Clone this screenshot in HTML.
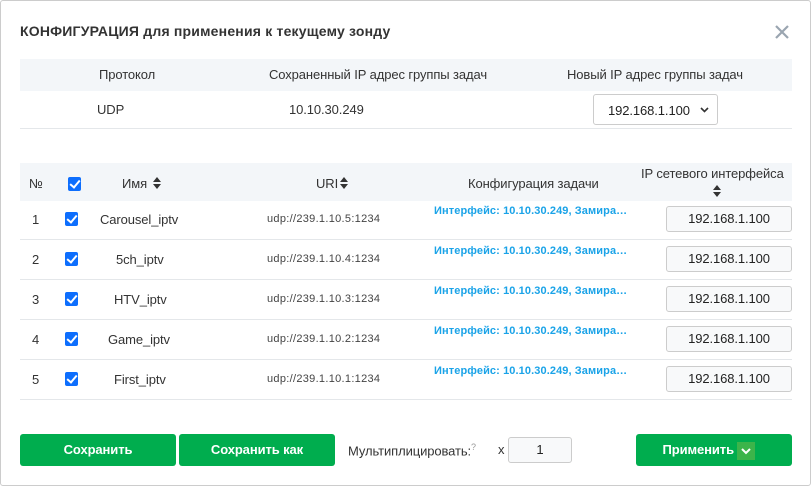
<!DOCTYPE html><html><head><meta charset="utf-8"><style>
*{box-sizing:border-box;margin:0;padding:0}
body{width:812px;height:492px;background:#fff;font-family:"Liberation Sans",sans-serif;color:#333;position:relative;overflow:hidden;font-size:13px;letter-spacing:-0.1px}
.modal{position:absolute;left:0;top:0;width:811px;height:486px;border:1px solid #ccc;border-radius:3px;background:#fff}
.a{position:absolute;white-space:nowrap}
.hdr{position:absolute;left:20px;width:772px;background:#f3f6f9}
.line{position:absolute;left:20px;width:772px;height:1px;background:#e4e7ea}
.cb{position:absolute;width:13px;height:14px;background:#0d6efd;border-radius:2px}
.cb:after{content:"";position:absolute;left:4px;top:1px;width:4px;height:8px;border:solid #fff;border-width:0 2px 2px 0;transform:rotate(40deg)}
.ip{position:absolute;left:666px;width:126px;height:26px;border:1px solid #ccc;border-radius:3px;background:#f8f9fa;text-align:center;line-height:24px;color:#222}
.cfg{color:#1aa3e8;font-weight:bold;font-size:11px;letter-spacing:0.1px}
.uri{font-size:11px;color:#444;letter-spacing:0.3px}
.btn{position:absolute;top:434px;height:32px;background:#00ad4e;border-radius:3px;color:#fff;font-weight:bold;text-align:center;line-height:32px}
</style></head><body><div class="modal"></div>
<svg width="0" height="0" style="position:absolute"><defs><g id="srt"><path d="M0 5L4 0L8 5Z M0 7L4 12L8 7Z" fill="#333"/></g></defs></svg>
<div class="a" style="left:20px;top:23px;font-weight:bold;font-size:14px;color:#333;letter-spacing:0.2px">КОНФИГУРАЦИЯ для применения к текущему зонду</div>
<svg class="a" style="left:775px;top:25px" width="14" height="14"><path d="M1 1L13 13M13 1L1 13" stroke="#9aa5b0" stroke-width="2.2"/></svg>
<div class="hdr" style="top:59px;height:32px"></div>
<div class="a" style="left:99px;top:67px">Протокол</div>
<div class="a" style="left:269px;top:67px">Сохраненный IP адрес группы задач</div>
<div class="a" style="left:567px;top:67px">Новый IP адрес группы задач</div>
<div class="a" style="left:97px;top:102px">UDP</div>
<div class="a" style="left:289px;top:102px">10.10.30.249</div>
<div class="a" style="left:593px;top:94px;width:125px;height:31px;border:1px solid #ccc;border-radius:3px;padding:8px 0 0 14px;color:#222">192.168.1.100<svg style="position:absolute;right:8px;top:12px" width="9" height="6"><path d="M1 1L4.5 4.5L8 1" stroke="#333" stroke-width="1.6" fill="none"/></svg></div>
<div class="line" style="top:128px"></div>
<div class="hdr" style="top:163px;height:38px"></div>
<div class="a" style="left:29px;top:176px">№</div>
<div class="cb" style="left:68px;top:177px"></div>
<div class="a" style="left:122px;top:176px">Имя</div><svg class="a" style="left:153px;top:177px" width="8" height="12"><use href="#srt"/></svg>
<div class="a" style="left:316px;top:176px">URI</div><svg class="a" style="left:340px;top:177px" width="8" height="12"><use href="#srt"/></svg>
<div class="a" style="left:468px;top:176px">Конфигурация задачи</div>
<div class="a" style="left:641px;top:166px">IP сетевого интерфейса</div>
<svg class="a" style="left:713px;top:185px" width="8" height="12"><use href="#srt"/></svg>

<div class="a" style="left:32px;top:212px">1</div><div class="cb" style="left:65px;top:212px"></div><div class="a" style="left:100px;top:212px">Carousel_iptv</div><div class="a uri" style="left:267px;top:213px">udp://239.1.10.5:1234</div><div class="a cfg" style="left:434px;top:205px">Интерфейс: 10.10.30.249, Замира…</div><div class="ip" style="top:206px">192.168.1.100</div><div class="line" style="top:239px"></div>
<div class="a" style="left:32px;top:252px">2</div><div class="cb" style="left:65px;top:252px"></div><div class="a" style="left:116px;top:252px">5ch_iptv</div><div class="a uri" style="left:267px;top:253px">udp://239.1.10.4:1234</div><div class="a cfg" style="left:434px;top:245px">Интерфейс: 10.10.30.249, Замира…</div><div class="ip" style="top:246px">192.168.1.100</div><div class="line" style="top:279px"></div>
<div class="a" style="left:32px;top:292px">3</div><div class="cb" style="left:65px;top:292px"></div><div class="a" style="left:114px;top:292px">HTV_iptv</div><div class="a uri" style="left:267px;top:293px">udp://239.1.10.3:1234</div><div class="a cfg" style="left:434px;top:285px">Интерфейс: 10.10.30.249, Замира…</div><div class="ip" style="top:286px">192.168.1.100</div><div class="line" style="top:319px"></div>
<div class="a" style="left:32px;top:332px">4</div><div class="cb" style="left:65px;top:332px"></div><div class="a" style="left:108px;top:332px">Game_iptv</div><div class="a uri" style="left:267px;top:333px">udp://239.1.10.2:1234</div><div class="a cfg" style="left:434px;top:325px">Интерфейс: 10.10.30.249, Замира…</div><div class="ip" style="top:326px">192.168.1.100</div><div class="line" style="top:359px"></div>
<div class="a" style="left:32px;top:372px">5</div><div class="cb" style="left:65px;top:372px"></div><div class="a" style="left:114px;top:372px">First_iptv</div><div class="a uri" style="left:267px;top:373px">udp://239.1.10.1:1234</div><div class="a cfg" style="left:434px;top:365px">Интерфейс: 10.10.30.249, Замира…</div><div class="ip" style="top:366px">192.168.1.100</div><div class="line" style="top:399px"></div>

<div class="btn" style="left:20px;width:156px">Сохранить</div>
<div class="btn" style="left:179px;width:156px">Сохранить как</div>
<div class="a" style="left:348px;top:442px">Мультиплицировать:<sup style="font-size:9px;color:#999">?</sup></div>
<div class="a" style="left:498px;top:442px">x</div>
<div class="a" style="left:508px;top:437px;width:64px;height:26px;border:1px solid #ccc;border-radius:3px;background:#f8f9fa;text-align:center;line-height:24px;color:#222">1</div>
<div class="btn" style="left:636px;width:156px;padding-right:10px">Применить <span style="display:inline-block;width:18px;height:18px;background:#3cb44a;vertical-align:middle;position:relative"><svg style="position:absolute;left:4px;top:6px" width="10" height="7"><path d="M1 1L5 5L9 1" stroke="#fff" stroke-width="2" fill="none"/></svg></span></div>
</body></html>
